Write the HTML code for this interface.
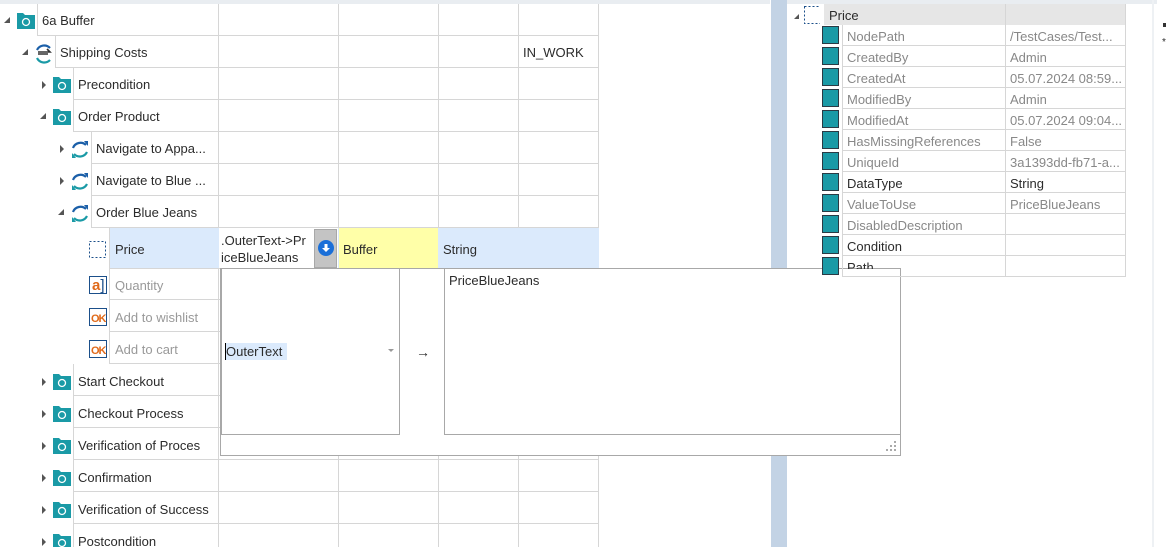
<!DOCTYPE html>
<html><head><meta charset="utf-8"><style>
*{margin:0;padding:0;box-sizing:border-box}
html,body{width:1168px;height:547px;overflow:hidden}
body{background:#fff;font-family:"Segoe UI","Liberation Sans",sans-serif;font-size:13px;color:#2b2b2b;position:relative}
.a{position:absolute}
.row{position:absolute;height:32px;border-bottom:1px solid #d6d6d6;border-left:1px solid #d6d6d6}
.t{position:absolute;white-space:nowrap;line-height:16px;margin-top:1px}
.vl{position:absolute;width:1px;background:#d6d6d6}
.pr .n{color:#888}
</style></head><body>
<div class="a" style="left:0;top:0;width:770px;height:4px;background:#e9edf1"></div>
<div class="a" style="left:787px;top:0;width:370px;height:4px;background:#e9edf1"></div>
<div class="a" style="left:771px;top:0;width:16px;height:547px;background:#c3d3e5"></div>
<div class="a" style="left:1152px;top:0;width:2px;height:547px;background:#eef1f4"></div>
<div class="a" style="left:218px;top:4px;width:1px;height:543px;background:#d6d6d6"></div>
<div class="vl" style="left:338px;top:4px;height:543px"></div>
<div class="vl" style="left:438px;top:4px;height:543px"></div>
<div class="vl" style="left:518px;top:4px;height:543px"></div>
<div class="vl" style="left:598px;top:4px;height:543px"></div>

<div class="row" style="left:37px;top:4px;width:562px"></div>
<div class="row" style="left:55px;top:36px;width:544px"></div>
<div class="row" style="left:73px;top:68px;width:526px"></div>
<div class="row" style="left:73px;top:100px;width:526px"></div>
<div class="row" style="left:91px;top:132px;width:508px"></div>
<div class="row" style="left:91px;top:164px;width:508px"></div>
<div class="row" style="left:91px;top:196px;width:508px"></div>
<div class="row" style="left:109px;top:228px;width:490px;height:41px;background:#dbeafc"></div>
<div class="a" style="left:219px;top:228px;width:119px;height:40px;background:#fff"></div>
<div class="a" style="left:314px;top:229px;width:23px;height:39px;background:#c4c4c4;border:1px solid #a8a8a8"></div>
<div class="a" style="left:318px;top:240px;width:16px;height:16px;border-radius:50%;background:#1a6fd8"></div>
<svg class="a" style="left:318px;top:240px" width="16" height="16"><path d="M6.5 4h3v4h2.5L8 12 4 8h2.5z" fill="#fff"/></svg>
<div class="a" style="left:339px;top:228px;width:99px;height:40px;background:#ffffa8"></div>
<div class="row" style="left:109px;top:268px;width:490px"></div>
<div class="row" style="left:109px;top:300px;width:490px"></div>
<div class="row" style="left:109px;top:332px;width:490px"></div>
<div class="row" style="left:73px;top:364px;width:526px"></div>
<div class="row" style="left:73px;top:396px;width:526px"></div>
<div class="row" style="left:73px;top:428px;width:526px"></div>
<div class="row" style="left:73px;top:460px;width:526px"></div>
<div class="row" style="left:73px;top:492px;width:526px"></div>
<div class="row" style="left:73px;top:524px;width:526px"></div>

<div class="t" style="left:42px;top:12px">6a Buffer</div>
<div class="t" style="left:60px;top:44px">Shipping Costs</div>
<div class="t" style="left:523px;top:44px">IN_WORK</div>
<div class="t" style="left:78px;top:76px">Precondition</div>
<div class="t" style="left:78px;top:108px">Order Product</div>
<div class="t" style="left:96px;top:140px">Navigate to Appa...</div>
<div class="t" style="left:96px;top:172px">Navigate to Blue ...</div>
<div class="t" style="left:96px;top:204px">Order Blue Jeans</div>
<div class="t" style="left:115px;top:241px">Price</div>
<div class="t" style="left:221px;top:231px;line-height:17px">.OuterText-&gt;Pr<br>iceBlueJeans</div>
<div class="t" style="left:343px;top:241px">Buffer</div>
<div class="t" style="left:443px;top:241px">String</div>
<div class="t" style="left:115px;top:277px;color:#999">Quantity</div>
<div class="t" style="left:115px;top:309px;color:#999">Add to wishlist</div>
<div class="t" style="left:115px;top:341px;color:#999">Add to cart</div>
<div class="t" style="left:78px;top:373px">Start Checkout</div>
<div class="t" style="left:78px;top:405px">Checkout Process</div>
<div class="t" style="left:78px;top:437px">Verification of Proces</div>
<div class="t" style="left:78px;top:469px">Confirmation</div>
<div class="t" style="left:78px;top:501px">Verification of Success</div>
<div class="t" style="left:78px;top:533px">Postcondition</div>

<svg class="a" style="left:0;top:0" width="110" height="547">
<g fill="#555">
<path d="M10 17v6h-6z"/><path d="M28 49v6h-6z"/><path d="M46 113v6h-6z"/><path d="M64 209v6h-6z"/>
<path d="M42 81l4 4-4 4z"/><path d="M60 145l4 4-4 4z"/><path d="M60 177l4 4-4 4z"/>
<path d="M42 378l4 4-4 4z"/><path d="M42 410l4 4-4 4z"/><path d="M42 442l4 4-4 4z"/><path d="M42 474l4 4-4 4z"/><path d="M42 506l4 4-4 4z"/><path d="M42 538l4 4-4 4z"/>
</g>
<g fill="#1a9aa6">
<path d="M17 13h6l2 2h10v14h-18z"/>
<path d="M53 77h6l2 2h10v14h-18z"/><path d="M53 109h6l2 2h10v14h-18z"/>
<path d="M53 374h6l2 2h10v14h-18z"/><path d="M53 406h6l2 2h10v14h-18z"/><path d="M53 438h6l2 2h10v14h-18z"/><path d="M53 470h6l2 2h10v14h-18z"/><path d="M53 502h6l2 2h10v14h-18z"/><path d="M53 534h6l2 2h10v14h-18z"/>
</g>
<g fill="none" stroke="#fff" stroke-width="1.3">
<circle cx="26" cy="22" r="3.5"/><circle cx="62" cy="86" r="3.5"/><circle cx="62" cy="118" r="3.5"/>
<circle cx="62" cy="383" r="3.5"/><circle cx="62" cy="415" r="3.5"/><circle cx="62" cy="447" r="3.5"/><circle cx="62" cy="479" r="3.5"/><circle cx="62" cy="511" r="3.5"/><circle cx="62" cy="543" r="3.5"/>
</g>
<g fill="none" stroke-width="2.2"><path d="M50 48a8 8 0 0 0-13 2" stroke="#1b5fa8"/><path d="M37 58a8 8 0 0 0 13 2" stroke="#1a9aa6"/></g>
<path d="M38 52h12l-3-3M38 54h10" stroke="#333" stroke-width="1.6" fill="none"/>
<g fill="none" stroke-width="2.2">
<path d="M86 145a8 8 0 0 0-13 3" stroke="#1b5fa8"/><path d="M74 154a8 8 0 0 0 13-2" stroke="#1a9aa6"/>
<path d="M86 177a8 8 0 0 0-13 3" stroke="#1b5fa8"/><path d="M74 186a8 8 0 0 0 13-2" stroke="#1a9aa6"/>
<path d="M86 209a8 8 0 0 0-13 3" stroke="#1b5fa8"/><path d="M74 218a8 8 0 0 0 13-2" stroke="#1a9aa6"/>
</g>
<g fill="#1b5fa8"><path d="M84 141l4 0 0 5z"/><path d="M84 173l4 0 0 5z"/><path d="M84 205l4 0 0 5z"/></g>
<g fill="#1a9aa6"><path d="M76 158l-4 0 0-5z"/><path d="M76 190l-4 0 0-5z"/><path d="M76 222l-4 0 0-5z"/></g>
<rect x="89.5" y="241.5" width="16" height="16" fill="none" stroke="#1b4f8a" stroke-dasharray="2 2"/>
<rect x="89.5" y="276.5" width="17" height="17" fill="#fff" stroke="#1b4f8a"/>
<rect x="89.5" y="308.5" width="17" height="17" fill="#fff" stroke="#1b4f8a"/>
<rect x="89.5" y="340.5" width="17" height="17" fill="#fff" stroke="#1b4f8a"/>
</svg>
<div class="t" style="left:92px;top:277px;color:#e06a1a;font-weight:bold;font-size:15px">a<span style="color:#1b4f8a;font-weight:normal">]</span></div>
<div class="t" style="left:91px;top:310px;color:#e06a1a;font-weight:bold;font-size:11px;letter-spacing:-1px">OK</div>
<div class="t" style="left:91px;top:342px;color:#e06a1a;font-weight:bold;font-size:11px;letter-spacing:-1px">OK</div>

<div class="a" style="left:220px;top:268px;width:681px;height:188px;background:#fff;border:1px solid #a8a8a8"></div>
<div class="a" style="left:221px;top:268px;width:179px;height:167px;border:1px solid #a8a8a8;background:#fff"></div>
<div class="a" style="left:225px;top:343px;width:62px;height:17px;background:#dbeafc"></div>
<div class="a" style="left:225px;top:343px;width:1px;height:17px;background:#000"></div>
<div class="t" style="left:226px;top:343px">OuterText</div>
<svg class="a" style="left:388px;top:349px" width="8" height="5"><path d="M0 0h6l-3 3z" fill="#999"/></svg>
<div class="t" style="left:416px;top:343px;font-size:14px">→</div>
<div class="a" style="left:444px;top:268px;width:457px;height:167px;border:1px solid #a8a8a8;background:#fff"></div>
<div class="t" style="left:449px;top:272px">PriceBlueJeans</div>
<svg class="a" style="left:885px;top:440px" width="12" height="12" fill="#aaa"><rect x="9" y="1" width="2" height="2"/><rect x="5" y="5" width="2" height="2"/><rect x="9" y="5" width="2" height="2"/><rect x="1" y="9" width="2" height="2"/><rect x="5" y="9" width="2" height="2"/><rect x="9" y="9" width="2" height="2"/></svg>

<div class="a" style="left:824px;top:4px;width:301px;height:21px;background:#e6e6e6"></div>
<svg class="a" style="left:790px;top:4px" width="30" height="22"><path d="M9 10v5h-5z" fill="#555"/><rect x="14.5" y="2.5" width="18" height="17" fill="none" stroke="#1b4f8a" stroke-dasharray="2 2"/></svg>
<div class="t" style="left:829px;top:7px">Price</div>
<div class="a" style="left:1005px;top:4px;width:1px;height:273px;background:#d6d6d6"></div>
<div class="a" style="left:1125px;top:4px;width:1px;height:273px;background:#d6d6d6"></div>
<div class="pr">
<svg class="a" style="left:821px;top:25px" width="305" height="253">
<g fill="#1a9aa6" stroke="#2b3a44" stroke-width="1">
<rect x="1.5" y="1.5" width="16" height="17"/><rect x="1.5" y="22.5" width="16" height="17"/><rect x="1.5" y="43.5" width="16" height="17"/><rect x="1.5" y="64.5" width="16" height="17"/><rect x="1.5" y="85.5" width="16" height="17"/><rect x="1.5" y="106.5" width="16" height="17"/><rect x="1.5" y="127.5" width="16" height="17"/><rect x="1.5" y="148.5" width="16" height="17"/><rect x="1.5" y="169.5" width="16" height="17"/><rect x="1.5" y="190.5" width="16" height="17"/><rect x="1.5" y="211.5" width="16" height="17"/><rect x="1.5" y="232.5" width="16" height="17"/>
</g>
<g fill="#d6d6d6"><rect x="21" y="20" width="284" height="1"/><rect x="21" y="41" width="284" height="1"/><rect x="21" y="62" width="284" height="1"/><rect x="21" y="83" width="284" height="1"/><rect x="21" y="104" width="284" height="1"/><rect x="21" y="125" width="284" height="1"/><rect x="21" y="146" width="284" height="1"/><rect x="21" y="167" width="284" height="1"/><rect x="21" y="188" width="284" height="1"/><rect x="21" y="209" width="284" height="1"/><rect x="21" y="230" width="284" height="1"/><rect x="21" y="251" width="284" height="1"/><rect x="21" y="0" width="1" height="252"/></g>
</svg>
<div class="t n" style="left:847px;top:28px">NodePath</div><div class="t n" style="left:1010px;top:28px">/TestCases/Test...</div>
<div class="t n" style="left:847px;top:49px">CreatedBy</div><div class="t n" style="left:1010px;top:49px">Admin</div>
<div class="t n" style="left:847px;top:70px">CreatedAt</div><div class="t n" style="left:1010px;top:70px">05.07.2024 08:59...</div>
<div class="t n" style="left:847px;top:91px">ModifiedBy</div><div class="t n" style="left:1010px;top:91px">Admin</div>
<div class="t n" style="left:847px;top:112px">ModifiedAt</div><div class="t n" style="left:1010px;top:112px">05.07.2024 09:04...</div>
<div class="t n" style="left:847px;top:133px">HasMissingReferences</div><div class="t n" style="left:1010px;top:133px">False</div>
<div class="t n" style="left:847px;top:154px">UniqueId</div><div class="t n" style="left:1010px;top:154px">3a1393dd-fb71-a...</div>
<div class="t" style="left:847px;top:175px">DataType</div><div class="t" style="left:1010px;top:175px">String</div>
<div class="t n" style="left:847px;top:196px">ValueToUse</div><div class="t n" style="left:1010px;top:196px">PriceBlueJeans</div>
<div class="t n" style="left:847px;top:217px">DisabledDescription</div>
<div class="t" style="left:847px;top:238px">Condition</div>
<div class="t" style="left:847px;top:259px;height:9px;overflow:hidden">Path</div>
</div>
<div class="a" style="left:1163px;top:23px;width:3px;height:4px;background:#333"></div>
<div class="t" style="left:1162px;top:34px;font-size:10px">*</div>
</body></html>
